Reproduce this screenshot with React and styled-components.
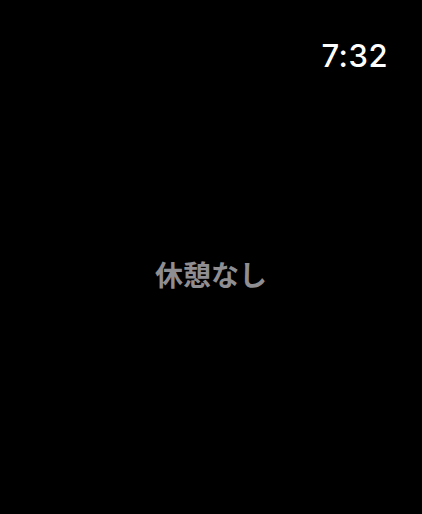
import styled, { createGlobalStyle } from 'styled-components';

const GlobalStyle = createGlobalStyle`
  html, body {
    margin: 0;
    padding: 0;
    background: #000;
  }
`;

const Screen = styled.div`
  width: 422px;
  height: 514px;
  background: #000;
  display: flex;
  flex-direction: column;
  font-family: Inter, "Noto Sans CJK JP", sans-serif;
`;

const StatusBar = styled.header`
  display: flex;
  justify-content: flex-end;
  padding: 38px 34px 0 0;
  height: 40px;
`;

const Clock = styled.div`
  color: #fff;
  font-size: 31px;
  font-weight: 500;
  line-height: 36px;
  letter-spacing: 0.5px;
`;

const Body = styled.main`
  flex: 1;
  display: flex;
  align-items: center;
  justify-content: center;
  padding-bottom: 44px;
`;

const Message = styled.p`
  margin: 0;
  color: #8e8e93;
  font-family: "Noto Sans CJK JP", sans-serif;
  font-size: 28px;
  font-weight: 700;
`;

const App = () => {
  return (
    <>
      <GlobalStyle />
      <Screen>
        <StatusBar>
          <Clock>7:32</Clock>
        </StatusBar>
        <Body>
          <Message>休憩なし</Message>
        </Body>
      </Screen>
    </>
  );
};

export default App;
